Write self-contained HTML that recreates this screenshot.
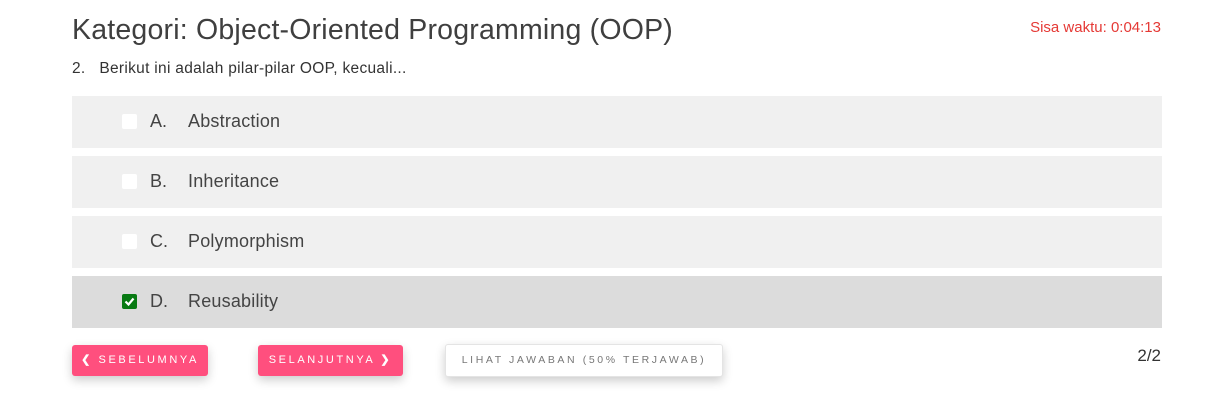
<!DOCTYPE html>
<html><head><meta charset="utf-8"><style>
body{margin:0;width:1219px;height:406px;background:#fff;font-family:"Liberation Sans",sans-serif;color:#444;position:relative;overflow:hidden}
.t{position:absolute;left:72px;top:14px;font-size:28.5px;color:#3f3f3f;letter-spacing:0.2px}
.timer{position:absolute;right:58px;top:19px;font-size:15px;color:#e53935}
.q{position:absolute;left:72px;top:60px;font-size:15.5px;color:#333;letter-spacing:0.3px}
.opt{position:absolute;left:72px;width:1090px;height:52px;background:#f0f0f0}
.opt.sel{background:#dcdcdc}
.cb{position:absolute;left:50px;top:18px;width:15px;height:15px;background:#fff;border-radius:2px}
.cb.on{background:#087a13}
.l{position:absolute;left:78px;top:15px;font-size:18px;color:#444}
.x{position:absolute;left:116px;top:15px;font-size:18px;color:#444;letter-spacing:0.2px}
.btn{position:absolute;top:345px;height:31px;line-height:31px;font-size:11px;letter-spacing:2.6px;border-radius:3px;text-align:center;box-shadow:0 4px 10px rgba(0,0,0,.2)}
.p{background:#ff4f7e;color:#fff}
.w{background:#fff;color:#777;border:1px solid #e4e4e4;top:344px}
.pg{position:absolute;right:58px;top:346px;font-size:17px;color:#333}
</style></head><body>
<div class="t">Kategori: Object-Oriented Programming (OOP)</div>
<div class="timer">Sisa waktu: 0:04:13</div>
<div class="q">2.&nbsp;&nbsp;&nbsp;Berikut ini adalah pilar-pilar OOP, kecuali...</div>
<div class="opt" style="top:96px"><div class="cb"></div><div class="l">A.</div><div class="x">Abstraction</div></div>
<div class="opt" style="top:156px"><div class="cb"></div><div class="l">B.</div><div class="x">Inheritance</div></div>
<div class="opt" style="top:216px"><div class="cb"></div><div class="l">C.</div><div class="x">Polymorphism</div></div>
<div class="opt sel" style="top:276px"><div class="cb on"><svg width="15" height="15" viewBox="0 0 15 15"><path d="M3.5 7.5l3 3 5-6" stroke="#fff" stroke-width="2.2" fill="none"/></svg></div><div class="l">D.</div><div class="x">Reusability</div></div>
<div class="btn p" style="left:72px;width:136px"><b>&#10094;</b> SEBELUMNYA</div>
<div class="btn p" style="left:258px;width:145px">SELANJUTNYA <b>&#10095;</b></div>
<div class="btn w" style="left:445px;width:276px;font-size:10.5px">LIHAT JAWABAN (50% TERJAWAB)</div>
<div class="pg">2/2</div>
</body></html>
